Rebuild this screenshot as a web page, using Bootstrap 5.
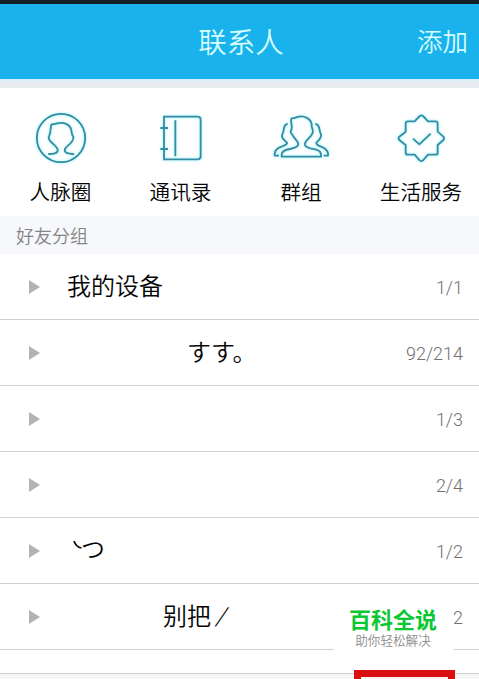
<!DOCTYPE html>
<html lang="zh-CN">
<head>
<meta charset="utf-8">
<meta name="viewport" content="width=device-width, initial-scale=1">
<title>联系人</title>
<link href="https://cdn.jsdelivr.net/npm/bootstrap@5.3.0/dist/css/bootstrap.min.css" rel="stylesheet">
<style>
body{font-family:Roboto,"Noto Sans CJK SC",sans-serif;color:#050505;font-weight:350;background:#fff}
.screen{height:679px;width:479px}
.status{height:4px;background:#152029}
.topbar{height:75px;background:#19b2ed;color:#d5fdff;display:grid;grid-template-columns:1fr auto 1fr;padding:2px 11px 0 14px;line-height:1}
.topbar h1{font-size:28.5px;font-weight:350;margin:0;padding-top:4px}
.topbar a{font-size:25.5px;color:#d5fdff}
.gapline{height:9px;background:linear-gradient(#d9f0fa,#e8ebef 45%)}
.shortcuts{height:128px;padding:17px 0 0 1px}
.shortcut{width:120px;flex:none;font-size:20.6px;line-height:30px;color:#050505}
.shortcut svg{width:60px;height:60px;filter:drop-shadow(0 0 1.5px #8ff3ff)}
.shortcut span{margin-top:13px;white-space:nowrap}
.shortcut:nth-child(-n+2) span{margin-left:-1px}
.group-title{height:38px;background:#f6f8fb;color:#858585;font-size:18px;padding:2px 0 0 16px}
.group-row{height:66px;border-bottom:1px solid #cfd1d1;padding:0 16px 0 29px}
.arrow{width:0;height:0;border-left:11px solid #b3b3b3;border-top:7.5px solid transparent;border-bottom:7.5px solid transparent}
.label{font-size:24px;line-height:36px;margin-left:27px;padding-top:1px;white-space:pre}
.label.jp{font-family:"Noto Sans CJK JP",sans-serif}
.pos-mid{margin-left:147px;margin-top:-4px}
.pos-left{margin-left:123px}
.pos-left i{display:inline-block;font-size:25px;transform:skewX(-8deg)}
.stroke-mark{margin-left:33px;margin-top:-3px}
.tsu{margin-left:-1px;margin-top:-6px}
.count{font-size:18px;color:#707070;font-weight:300;letter-spacing:0;padding-top:1px}
.last{height:24px;border-bottom:1px solid #cfd1d1}
.tabs{height:6px;background:#f6f6f7}
.mark-box{left:334px;top:600px;width:120px;height:54px;padding-right:2px;background:#fff;line-height:1}
.mark-box strong{font-size:22px;font-weight:700;color:#0ac832;margin-top:10px}
.mark-box small{font-size:12.6px;color:#8c8c8c;font-weight:350;margin-top:3px}
.focus-box{left:354px;top:670px;width:101px;height:40px;border:7px solid #d9100f;background:#faf5f5}
</style>
<script src="https://cdn.jsdelivr.net/npm/bootstrap@5.3.0/dist/js/bootstrap.bundle.min.js"></script>
</head>
<body>
<div class="screen position-relative overflow-hidden">
  <div class="status"></div>
  <header class="topbar align-items-center">
    <span></span><h1>联系人</h1><a class="text-decoration-none text-end">添加</a>
  </header>
  <div class="gapline"></div>
  <nav class="shortcuts d-flex">
    <a class="shortcut d-flex flex-column align-items-center text-decoration-none">
      <svg viewBox="0 0 180 180" fill="none" stroke="#348da3" stroke-width="5.5" stroke-linecap="round" stroke-linejoin="round"><circle cx="90" cy="99" r="72.500"/><path d="M54 147C69 147 82 144 80 134C78 123 63 117 55 104Q51 98 55 91C61 78 57 66 62 58Q70 58 75 56C98 49 121 58 122 82Q122 89 127 95Q129 102 122 111C113 123 101 125 101 136C101 146 115 147 127 147"/></svg>
      <span>人脉圈</span></a>
    <a class="shortcut d-flex flex-column align-items-center text-decoration-none">
      <svg viewBox="0 0 180 180" fill="none" stroke="#348da3" stroke-width="5.500"><path d="M39 35H140Q149 35 149 44V154Q149 163 140 163H39ZM73 46V154M28 69H51M28 132H51"/></svg>
      <span>通讯录</span></a>
    <a class="shortcut d-flex flex-column align-items-center text-decoration-none">
      <svg viewBox="0 0 180 180" fill="none" stroke="#348da3" stroke-width="5.500" stroke-linejoin="round"><path d="M32 155V147C34 127 75 137 82 119C84 109 70 103 64 89Q56 82 61 74C66 60 56 47 62 40Q70 40 76 37C98 28 124 41 122 65Q127 77 125 83C120 100 98 107 102 120C108 137 150 126 150 149V155Z"/><path d="M50 57C34 58 41 78 35 85C28 98 40 105 48 113C51 126 14 121 11 145V152H24M133 57C149 58 143 78 149 85C155 98 143 106 136 113C133 127 168 120 171 145V152H158"/></svg>
      <span>群组</span></a>
    <a class="shortcut d-flex flex-column align-items-center text-decoration-none">
      <svg viewBox="0 0 180 180" fill="none" stroke="#348da3" stroke-width="5.500" stroke-linejoin="round"><path d="M86 33Q91 29 96 33L111 49H134Q140 49 140 56V80L157 95Q162 100 157 105L140 120V143Q140 149 134 149H111L96 166Q91 171 86 166L71 149H50Q44 149 44 143V120L25 105Q20 100 25 95L44 80V56Q44 49 50 49H71ZM66 101L85 118L119 86"/></svg>
      <span>生活服务</span></a>
  </nav>
  <div class="group-title d-flex align-items-center">好友分组</div>
  <main>
    <div class="group-row d-flex align-items-center"><i class="arrow"></i><span class="label">我的设备</span><span class="count ms-auto">1/1</span></div>
    <div class="group-row d-flex align-items-center"><i class="arrow"></i><span class="label jp pos-mid">すす。</span><span class="count ms-auto">92/214</span></div>
    <div class="group-row d-flex align-items-center"><i class="arrow"></i><span class="count ms-auto">1/3</span></div>
    <div class="group-row d-flex align-items-center"><i class="arrow"></i><span class="count ms-auto">2/4</span></div>
    <div class="group-row d-flex align-items-center"><i class="arrow"></i>
      <svg width="9" height="16" viewBox="0 0 9 16" class="stroke-mark" fill="none" stroke="#050505" stroke-width="1.700"><path d="M1 0Q3 6 8.500 7"/></svg>
      <span class="label jp tsu">つ</span><span class="count ms-auto">1/2</span></div>
    <div class="group-row d-flex align-items-center"><i class="arrow"></i><span class="label pos-left">别把 <i>/</i></span><span class="count ms-auto">2</span></div>
  </main>
  <div class="last"></div>
  <div class="tabs"></div>
  <div class="mark-box position-absolute d-flex flex-column align-items-center"><strong>百科全说</strong><small>助你轻松解决</small></div>
  <div class="focus-box position-absolute"></div>
</div>
</body>
</html>
